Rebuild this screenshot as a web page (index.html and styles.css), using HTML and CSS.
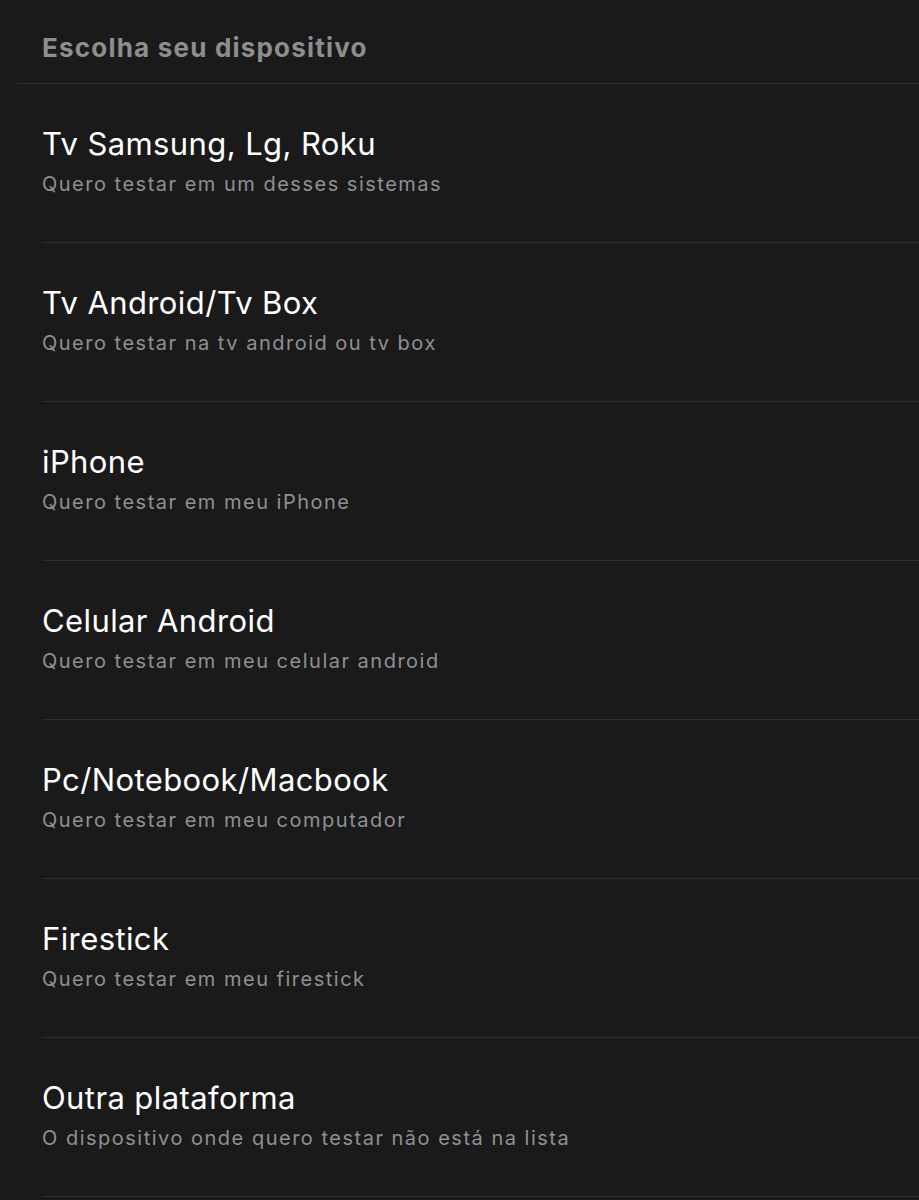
FILE: index.html
```html
<!DOCTYPE html>
<html lang="pt-BR">
<head>
<meta charset="utf-8">
<title>Escolha seu dispositivo</title>
<link rel="stylesheet" href="styles.css">
</head>
<body>
<div class="page">
  <div class="header">Escolha seu dispositivo</div>
  <ul class="list">
    <li class="item"><div class="title">Tv Samsung, Lg, Roku</div><div class="sub">Quero testar em um desses sistemas</div></li>
    <li class="item"><div class="title">Tv Android/Tv Box</div><div class="sub">Quero testar na tv android ou tv box</div></li>
    <li class="item"><div class="title">iPhone</div><div class="sub">Quero testar em meu iPhone</div></li>
    <li class="item"><div class="title">Celular Android</div><div class="sub">Quero testar em meu celular android</div></li>
    <li class="item"><div class="title">Pc/Notebook/Macbook</div><div class="sub">Quero testar em meu computador</div></li>
    <li class="item"><div class="title">Firestick</div><div class="sub">Quero testar em meu firestick</div></li>
    <li class="item"><div class="title">Outra plataforma</div><div class="sub">O dispositivo onde quero testar não está na lista</div></li>
  </ul>
</div>
</body>
</html>
```

FILE: styles.css
```css
html, body {
  margin: 0;
  padding: 0;
  background: #1a1a1b;
  font-family: Inter, "Noto Sans", sans-serif;
}
.page {
  padding-left: 17px;
  min-height: 1200px;
  box-sizing: border-box;
}
.header {
  height: 84px;
  box-sizing: border-box;
  padding: 32px 0 0 25px;
  font-size: 26px;
  line-height: 32px;
  font-weight: 700;
  letter-spacing: 1.2px;
  color: #8e8e91;
  border-bottom: 1px solid #2e2e30;
}
.list {
  list-style: none;
  margin: 0;
  padding: 0;
}
.item {
  margin-left: 25px;
  height: 159px;
  box-sizing: border-box;
  padding-top: 42px;
  border-bottom: 1px solid #2e2e30;
}
.title {
  font-size: 31px;
  line-height: 36px;
  letter-spacing: 0.4px;
  color: #ffffff;
}
.sub {
  margin-top: 10px;
  font-size: 20px;
  line-height: 24px;
  letter-spacing: 1.5px;
  color: #909093;
}
```
